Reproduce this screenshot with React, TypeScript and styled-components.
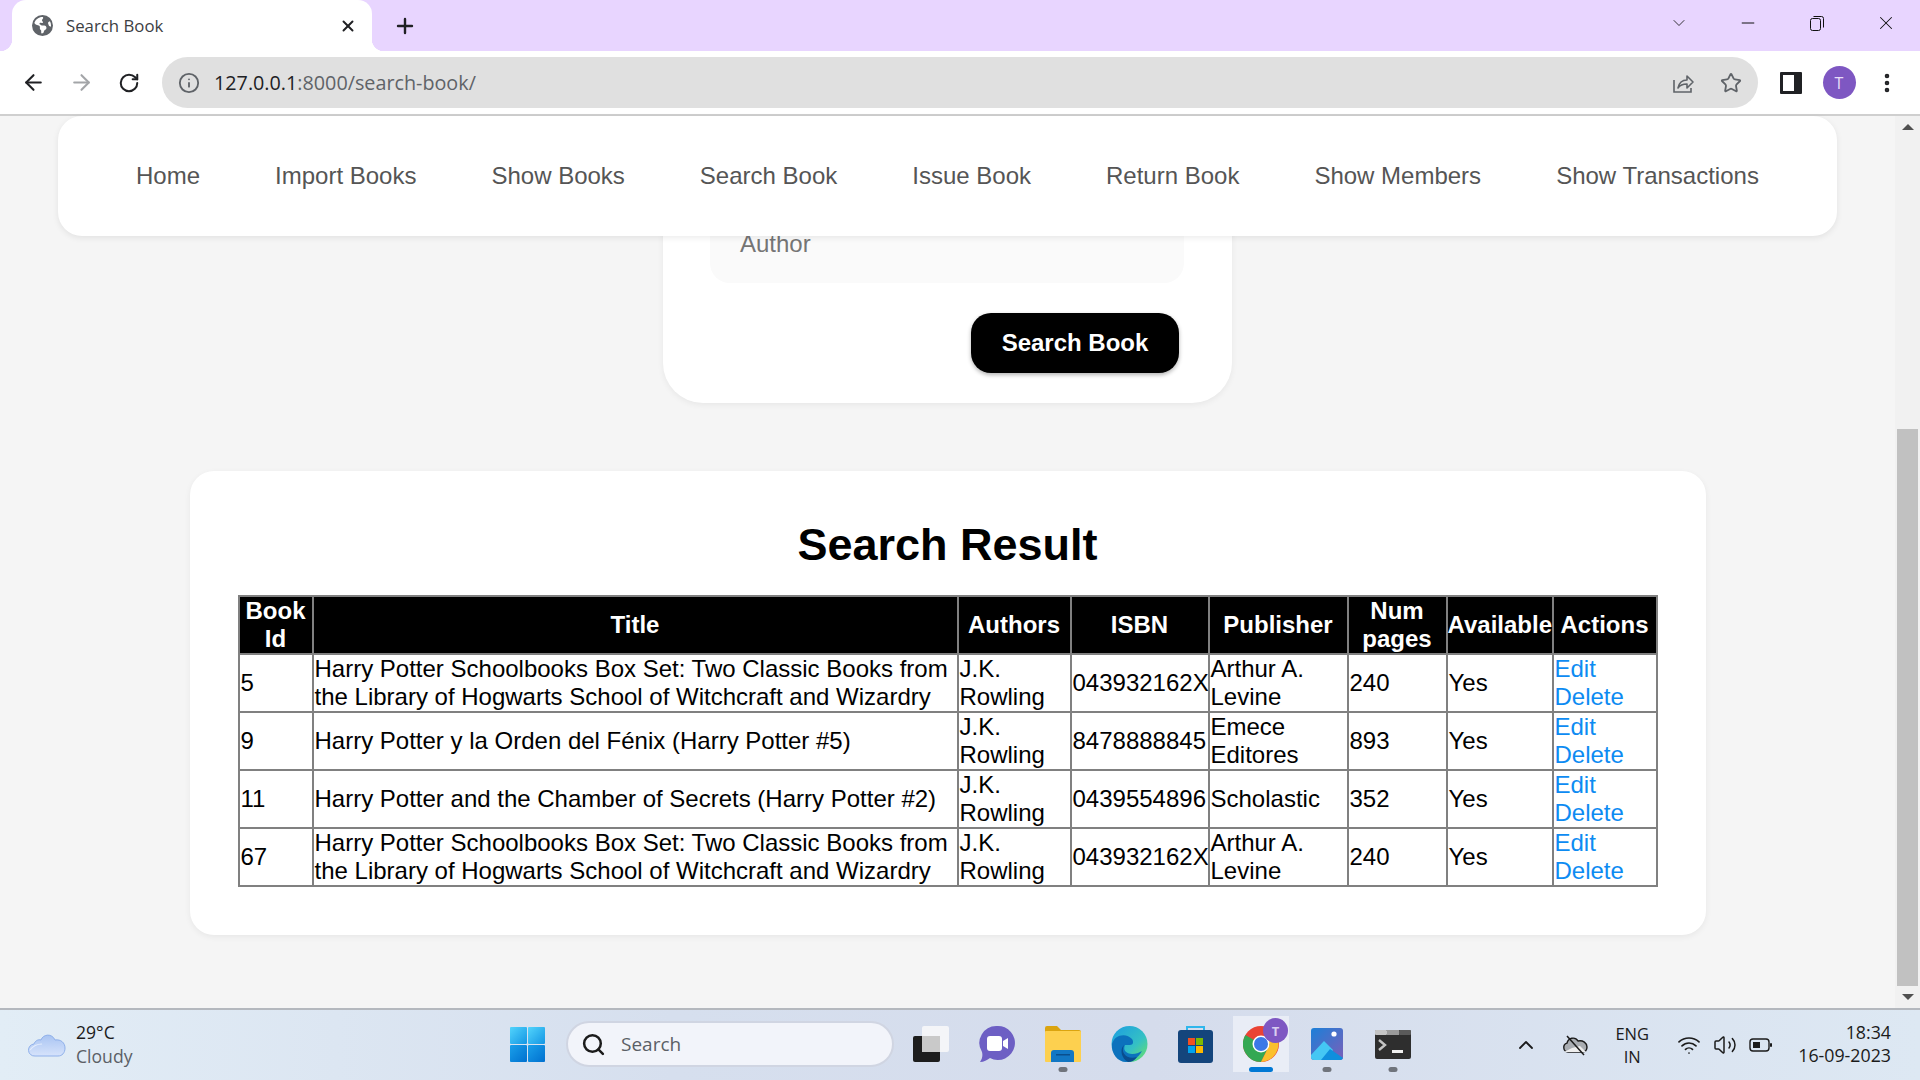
import styled, { createGlobalStyle } from 'styled-components'
import { ArrowLeft, ArrowRight, ChevronDown, ChevronUp, Info, Minus, MoreVertical, Plus, RotateCw, Search, Star, Volume2, Wifi, X } from 'lucide-react'
import { FaEarthAmericas } from 'react-icons/fa6'

const NAV_LINKS = ['Home', 'Import Books', 'Show Books', 'Search Book', 'Issue Book', 'Return Book', 'Show Members', 'Show Transactions']

const HEADERS = ['Book Id', 'Title', 'Authors', 'ISBN', 'Publisher', 'Num pages', 'Available', 'Actions']
const COLUMN_WIDTHS = [74, 645, 113, 138, 139, 99, 106, 104]

const BOX_SET = 'Harry Potter Schoolbooks Box Set: Two Classic Books from the Library of Hogwarts School of Witchcraft and Wizardry'
const BOOKS = [
  { id: 5, title: BOX_SET, isbn: '043932162X', publisher: 'Arthur A. Levine', pages: 240 },
  { id: 9, title: 'Harry Potter y la Orden del Fénix (Harry Potter #5)', isbn: '8478888845', publisher: 'Emece Editores', pages: 893 },
  { id: 11, title: 'Harry Potter and the Chamber of Secrets (Harry Potter #2)', isbn: '0439554896', publisher: 'Scholastic', pages: 352 },
  { id: 67, title: BOX_SET, isbn: '043932162X', publisher: 'Arthur A. Levine', pages: 240 },
]

const GlobalStyle = createGlobalStyle`
  html, body {
    margin: 0;
    padding: 0;
    overflow: hidden;
  }
  * {
    box-sizing: border-box;
  }
`

const ShareIcon = () => (
  <svg width="24" height="24" viewBox="0 0 24 24" fill="none" stroke="#5f6368" strokeWidth="1.6">
    <path d="M3 9v12h17v-4" />
    <path d="M7 17c1-5 4-8 9-8V5l6 6-6 6v-4c-4 0-7 1-9 4z" strokeLinejoin="round" />
  </svg>
)

const SidePanelIcon = () => (
  <svg width="22" height="22" viewBox="0 0 22 22">
    <rect width="22" height="22" rx="1" fill="#202124" />
    <rect x="3" y="3" width="11" height="16" fill="#fff" />
  </svg>
)

const RestoreIcon = () => (
  <svg width="16" height="16" viewBox="0 0 16 16" fill="none" stroke="#111" strokeWidth="1">
    <rect x="1.5" y="3.5" width="10" height="12" rx="2" />
    <path d="M4.5 1.5h8a2 2 0 0 1 2 2v9" />
  </svg>
)

const CloudIcon = () => (
  <svg width="38" height="30" viewBox="0 0 38 30">
    <defs>
      <linearGradient id="cloudFill" x1="0" y1="0" x2="0" y2="1">
        <stop offset="0" stopColor="#a9c4f2" />
        <stop offset="1" stopColor="#d6e3fb" />
      </linearGradient>
    </defs>
    <path d="M7 27a6 6 0 0 1-1-12c1-3 4-5 7-4 2-6 11-7 14 0 6-1 10 3 10 8s-3 8-7 8z" fill="url(#cloudFill)" stroke="#8fb0ea" strokeWidth="1" />
    <path d="M2 21c3-4 8-6 12-6" fill="none" stroke="#e4edfc" strokeWidth="1.2" />
  </svg>
)

const WindowsIcon = () => (
  <svg width="35" height="35" viewBox="0 0 35 35">
    <defs>
      <linearGradient id="winA" x1="0" y1="0" x2="1" y2="1">
        <stop offset="0" stopColor="#52d4fc" />
        <stop offset="1" stopColor="#1496e4" />
      </linearGradient>
      <linearGradient id="winB" x1="0" y1="0" x2="1" y2="1">
        <stop offset="0" stopColor="#1aa0ea" />
        <stop offset="1" stopColor="#0070cf" />
      </linearGradient>
    </defs>
    <rect x="0" y="0" width="17" height="17" rx="1" fill="url(#winA)" />
    <rect x="18" y="0" width="17" height="17" rx="1" fill="url(#winA)" />
    <rect x="0" y="18" width="17" height="17" rx="1" fill="url(#winB)" />
    <rect x="18" y="18" width="17" height="17" rx="1" fill="url(#winB)" />
  </svg>
)

const TaskViewIcon = () => (
  <svg width="36" height="36" viewBox="0 0 36 36">
    <rect x="0" y="10" width="27" height="26" rx="2" fill="#1d1d1d" />
    <rect x="9" y="0" width="27" height="26" rx="2" fill="#f4f5f8" />
    <rect x="9" y="10" width="18" height="16" fill="#c9c9c9" />
  </svg>
)

const ChatIcon = () => (
  <svg width="36" height="38" viewBox="0 0 36 38">
    <path d="M18 1a17 17 0 1 1-7 32c-3 2-6 4-10 4 2-3 3-6 2-10A17 17 0 0 1 18 1z" fill="#6d5fc4" />
    <rect x="8" y="11" width="15" height="15" rx="3" fill="#fff" />
    <path d="M24 16l5-3v11l-5-3z" fill="#fff" />
  </svg>
)

const FolderIcon = () => (
  <svg width="36" height="36" viewBox="0 0 36 36">
    <path d="M0 2a2 2 0 0 1 2-2h10l4 4h18a2 2 0 0 1 2 2v4H0z" fill="#dba40f" />
    <rect x="0" y="5" width="36" height="31" rx="1" fill="#fdd04f" />
    <path d="M6 36v-9a3 3 0 0 1 3-3h17a3 3 0 0 1 3 3v9z" fill="#1277c4" />
    <rect x="11" y="28" width="14" height="1.5" fill="#0a4f8d" />
  </svg>
)

const EdgeIcon = () => (
  <svg width="37" height="38" viewBox="0 0 37 38">
    <defs>
      <linearGradient id="edgeTop" x1="0" y1="0" x2="1" y2="1">
        <stop offset="0" stopColor="#1b9de2" />
        <stop offset="0.6" stopColor="#35c1c4" />
        <stop offset="1" stopColor="#6fe45f" />
      </linearGradient>
    </defs>
    <circle cx="18.5" cy="19" r="18" fill="url(#edgeTop)" />
    <path d="M1 19c2-9 14-12 20-5 2 3 1 6-2 6h-5c-3 6 3 11 13 8l4-2c-4 7-10 11-16 11C7 37 0 29 1 19z" fill="#0c72bd" />
    <path d="M13 20c-4 8 3 15 13 12-2 3-5 5-9 5-6-3-9-12-4-17z" fill="#0a4d8e" />
  </svg>
)

const StoreIcon = () => (
  <svg width="35" height="38" viewBox="0 0 35 38">
    <path d="M9 8V2h17v6" fill="none" stroke="#2fb6ec" strokeWidth="2" />
    <rect x="0" y="5" width="35" height="33" rx="3" fill="#14457c" />
    <rect x="10" y="13" width="7" height="7" fill="#f25022" />
    <rect x="18" y="13" width="7" height="7" fill="#7fba00" />
    <rect x="10" y="21" width="7" height="7" fill="#00a4ef" />
    <rect x="18" y="21" width="7" height="7" fill="#ffb900" />
  </svg>
)

const ChromeIcon = () => (
  <svg width="36" height="36" viewBox="0 0 36 36">
    <circle cx="18" cy="18" r="18" fill="#ea4335" />
    <path d="M18 18L2.4 9A18 18 0 0 0 18 36l9-18z" fill="#34a853" />
    <path d="M18 10h15.6A18 18 0 0 1 18 36l9-18z" fill="#fbc02d" />
    <circle cx="18" cy="18" r="8.5" fill="#fff" />
    <circle cx="18" cy="18" r="7" fill="#3b78e7" />
  </svg>
)

const PhotosIcon = () => (
  <svg width="32" height="32" viewBox="0 0 32 32">
    <defs>
      <linearGradient id="photoBg" x1="0" y1="0" x2="1" y2="1">
        <stop offset="0" stopColor="#1b7fd8" />
        <stop offset="1" stopColor="#7b5fb8" />
      </linearGradient>
    </defs>
    <rect width="32" height="32" rx="3" fill="url(#photoBg)" />
    <circle cx="23" cy="6" r="2.6" fill="#fff" />
    <path d="M0 27l13-14 9 9-7 10H3a3 3 0 0 1-3-3z" fill="#44c7f4" />
    <path d="M10 32l9-11 13 9v-1a3 3 0 0 1-3 3z" fill="#0f8fdd" />
  </svg>
)

const TerminalIcon = () => (
  <svg width="36" height="29" viewBox="0 0 36 29">
    <rect width="36" height="29" rx="2" fill="#2e2e2e" />
    <rect x="12" y="0" width="12" height="5" fill="#9a9a9a" />
    <rect x="0" y="0" width="12" height="5" rx="1" fill="#c4c4c4" />
    <rect x="24" y="0" width="12" height="5" rx="1" fill="#5a5a5a" />
    <path d="M4 10l6 5-6 5" fill="none" stroke="#c4c4c4" strokeWidth="2.4" />
    <rect x="17" y="20" width="11" height="3" fill="#f0f0f0" />
  </svg>
)

const OneDriveOffIcon = () => (
  <svg width="26" height="24" viewBox="0 0 26 24">
    <path d="M6 19a4.5 4.5 0 0 1-1-8.8C6 5 13 3 16 8c5-1 9 2 9 6s-2 5-5 5z" fill="#a9adb2" stroke="#1b1b1b" strokeWidth="1.4" />
    <path d="M2 19h22l-6-6-8 2z" fill="#eee" />
    <path d="M5 3l17 19" stroke="#1b1b1b" strokeWidth="1.5" />
  </svg>
)

const BatteryIcon = () => (
  <svg width="24" height="16" viewBox="0 0 24 16">
    <rect x="1" y="2" width="19" height="12" rx="3" fill="none" stroke="#1b1b1b" strokeWidth="1.4" />
    <rect x="4" y="5" width="7" height="6" fill="#1b1b1b" />
    <rect x="21" y="6" width="2" height="4" rx="1" fill="#1b1b1b" />
  </svg>
)

function App() {
  return (
    <Screen>
      <GlobalStyle />
      <TabStrip>
        <Tab>
          <FaEarthAmericas size={21} color="#5f6368" />
          <TabTitle>Search Book</TabTitle>
          <X size={18} color="#202124" strokeWidth={2.6} />
        </Tab>
        <NewTab><Plus size={24} color="#202124" strokeWidth={2.4} /></NewTab>
        <WindowControls>
          <WindowButton><ChevronDown size={20} strokeWidth={1} /></WindowButton>
          <WindowButton><Minus size={20} strokeWidth={1.2} /></WindowButton>
          <WindowButton><RestoreIcon /></WindowButton>
          <WindowButton><X size={22} strokeWidth={1.1} /></WindowButton>
        </WindowControls>
      </TabStrip>

      <Toolbar>
        <ToolButton><ArrowLeft size={25} color="#202124" strokeWidth={2} /></ToolButton>
        <ToolButton><ArrowRight size={25} color="#a3a5a8" strokeWidth={2} /></ToolButton>
        <ToolButton><RotateCw size={22} color="#202124" strokeWidth={2.2} /></ToolButton>
        <Omnibox>
          <Info size={22} color="#5f6368" strokeWidth={2} />
          <Url><UrlHost>127.0.0.1</UrlHost>:8000/search-book/</Url>
          <OmniActions>
            <ToolButton><ShareIcon /></ToolButton>
            <ToolButton><Star size={22} color="#5f6368" strokeWidth={2} /></ToolButton>
          </OmniActions>
        </Omnibox>
        <ToolButton><SidePanelIcon /></ToolButton>
        <ToolButton><Avatar>T</Avatar></ToolButton>
        <ToolButton><MoreVertical size={24} color="#202124" strokeWidth={2.6} /></ToolButton>
      </Toolbar>

      <Viewport>
        <Page>
          <NavBar>
            {NAV_LINKS.map(link => <NavLink key={link}>{link}</NavLink>)}
          </NavBar>

          <FormCard>
            <AuthorField>Author</AuthorField>
            <SubmitButton>Search Book</SubmitButton>
          </FormCard>

          <ResultCard>
            <ResultTitle>Search Result</ResultTitle>
            <BookTable>
              <colgroup>
                {COLUMN_WIDTHS.map((width, i) => <col key={i} style={{ width }} />)}
              </colgroup>
              <thead>
                <tr>
                  {HEADERS.map(header => <HeadCell key={header}>{header}</HeadCell>)}
                </tr>
              </thead>
              <tbody>
                {BOOKS.map(book => (
                  <tr key={book.id}>
                    <Cell>{book.id}</Cell>
                    <Cell>{book.title}</Cell>
                    <Cell>J.K. Rowling</Cell>
                    <Cell>{book.isbn}</Cell>
                    <Cell>{book.publisher}</Cell>
                    <Cell>{book.pages}</Cell>
                    <Cell>Yes</Cell>
                    <Cell>
                      <ActionLink href="#">Edit</ActionLink>
                      <ActionLink href="#">Delete</ActionLink>
                    </Cell>
                  </tr>
                ))}
              </tbody>
            </BookTable>
          </ResultCard>
        </Page>
        <ScrollTrack>
          <ScrollArrow $up />
          <ScrollSpace>
            <ScrollThumb />
          </ScrollSpace>
          <ScrollArrow />
        </ScrollTrack>
      </Viewport>

      <Taskbar>
        <Weather>
          <CloudIcon />
          <WeatherText>
            <span>29°C</span>
            <WeatherNote>Cloudy</WeatherNote>
          </WeatherText>
        </Weather>
        <TaskIcons>
          <TaskSlot><WindowsIcon /></TaskSlot>
          <SearchBox>
            <Search size={25} color="#1b1b1b" strokeWidth={2.4} />
            <span>Search</span>
          </SearchBox>
          <TaskSlot><TaskViewIcon /></TaskSlot>
          <TaskSlot><ChatIcon /></TaskSlot>
          <TaskSlot $state="open"><FolderIcon /></TaskSlot>
          <TaskSlot><EdgeIcon /></TaskSlot>
          <TaskSlot><StoreIcon /></TaskSlot>
          <TaskSlot $state="active">
            <ChromeIcon />
            <ChromeBadge>T</ChromeBadge>
          </TaskSlot>
          <TaskSlot $state="open"><PhotosIcon /></TaskSlot>
          <TaskSlot $state="open"><TerminalIcon /></TaskSlot>
        </TaskIcons>
        <Tray>
          <TrayChevron><ChevronUp size={24} color="#1b1b1b" strokeWidth={1.8} /></TrayChevron>
          <OneDriveOffIcon />
          <Language>
            <span>ENG</span>
            <span>IN</span>
          </Language>
          <TrayIcons>
            <Wifi size={24} color="#1b1b1b" strokeWidth={1.7} />
            <Volume2 size={24} color="#1b1b1b" strokeWidth={1.5} />
            <BatteryIcon />
          </TrayIcons>
          <Clock>
            <span>18:34</span>
            <span>16-09-2023</span>
          </Clock>
        </Tray>
      </Taskbar>
    </Screen>
  )
}

const Screen = styled.div`
  width: 1920px;
  height: 1080px;
  display: flex;
  flex-direction: column;
  overflow: hidden;
  font-family: "Liberation Sans", Arial, sans-serif;
`
const TabStrip = styled.div`
  height: 51px;
  flex: none;
  display: flex;
  align-items: flex-end;
  padding-left: 12px;
  background-color: #e8d5ff;
`
const Tab = styled.div`
  position: relative;
  width: 360px;
  height: 51px;
  padding: 0 15px 0 20px;
  display: flex;
  align-items: center;
  background-color: #fff;
  border-radius: 14px 14px 0 0;
  &::before, &::after {
    content: '';
    position: absolute;
    bottom: 0;
    width: 12px;
    height: 12px;
  }
  &::before {
    left: -12px;
    background: radial-gradient(circle at 0 0, #e8d5ff 12px, #fff 12.5px);
  }
  &::after {
    right: -12px;
    background: radial-gradient(circle at 100% 0, #e8d5ff 12px, #fff 12.5px);
  }
`
const TabTitle = styled.span`
  flex: 1;
  margin-left: 13px;
  font-family: "Open Sans", sans-serif;
  font-size: 16.8px;
  color: #3c4043;
`
const NewTab = styled.div`
  width: 40px;
  height: 51px;
  margin-left: 13px;
  display: flex;
  align-items: center;
  justify-content: center;
`
const WindowControls = styled.div`
  margin-left: auto;
  height: 45px;
  align-self: flex-start;
  display: flex;
`
const WindowButton = styled.div`
  width: 69px;
  display: flex;
  align-items: center;
  justify-content: center;
  color: #111;
`
const Toolbar = styled.div`
  height: 65px;
  flex: none;
  padding: 0 9px 0 9px;
  display: flex;
  align-items: center;
  background-color: #fff;
  border-bottom: 2px solid #cfcfcf;
`
const ToolButton = styled.div`
  width: 48px;
  height: 48px;
  flex: none;
  display: flex;
  align-items: center;
  justify-content: center;
`
const Omnibox = styled.div`
  flex: 1;
  height: 51px;
  margin: 0 9px 0 9px;
  padding: 0 3px 0 16px;
  display: flex;
  align-items: center;
  background-color: #e0e0e0;
  border-radius: 26px;
`
const Url = styled.span`
  margin-left: 14px;
  font-family: "Open Sans", sans-serif;
  font-size: 19.75px;
  color: #5f6368;
`
const UrlHost = styled.span`
  color: #202124;
`
const OmniActions = styled.div`
  margin-left: auto;
  display: flex;
`
const Avatar = styled.div`
  width: 33px;
  height: 33px;
  display: flex;
  align-items: center;
  justify-content: center;
  border-radius: 50%;
  background-color: #7e57c2;
  color: #e8def8;
  font-family: "Open Sans", sans-serif;
  font-size: 16px;
`
const Viewport = styled.div`
  flex: 1;
  min-height: 0;
  display: flex;
  background-color: #f5f5f5;
`
const Page = styled.div`
  flex: 1;
  min-width: 0;
  display: flex;
  flex-direction: column;
  align-items: center;
`
const NavBar = styled.nav`
  position: relative;
  z-index: 2;
  width: 1779px;
  height: 120px;
  flex: none;
  padding: 0 78px;
  display: flex;
  align-items: center;
  justify-content: space-between;
  background-color: #fff;
  border-radius: 24px;
  box-shadow: 0 2px 6px rgba(0, 0, 0, 0.08);
`
const NavLink = styled.a`
  font-size: 24px;
  color: #555;
`
/* the page is scrolled, the top of the form is hidden under the sticky nav */
const FormCard = styled.div`
  width: 569px;
  margin-top: -40px;
  padding: 17px 48px 30px 47px;
  display: flex;
  flex-direction: column;
  background-color: #fff;
  border-radius: 40px;
  box-shadow: 0 2px 6px rgba(0, 0, 0, 0.06);
`
const AuthorField = styled.div`
  height: 70px;
  padding: 0 0 9px 30px;
  display: flex;
  align-items: center;
  font-size: 24px;
  color: #757575;
  background-color: #fafafa;
  border-radius: 20px;
`
const SubmitButton = styled.button`
  width: 208px;
  height: 60px;
  margin: 30px 5px 0 auto;
  border: none;
  border-radius: 20px;
  background-color: #000;
  color: #fff;
  font-family: inherit;
  font-size: 24px;
  font-weight: 700;
  box-shadow: 0 2px 4px rgba(0, 0, 0, 0.3);
`
const ResultCard = styled.section`
  width: 1516px;
  margin-top: 68px;
  padding: 48px;
  background-color: #fff;
  border-radius: 24px;
  box-shadow: 0 2px 6px rgba(0, 0, 0, 0.06);
`
const ResultTitle = styled.h2`
  margin: 0 0 24px;
  font-size: 45px;
  line-height: 52px;
  font-weight: 700;
  text-align: center;
  color: #000;
`
const BookTable = styled.table`
  width: 1420px;
  table-layout: fixed;
  border-collapse: collapse;
  border: 2px solid #808080;
`
const HeadCell = styled.th`
  padding: 0;
  border: 2px solid #808080;
  background-color: #000;
  color: #fff;
  font-size: 24px;
  line-height: 28px;
  font-weight: 700;
  text-align: center;
`
const Cell = styled.td`
  padding: 0 0 0 1px;
  border: 2px solid #808080;
  font-size: 24px;
  line-height: 28px;
  color: #000;
`
const ActionLink = styled.a`
  display: block;
  color: #0d8bf2;
  text-decoration: none;
`
const ScrollTrack = styled.div`
  width: 25px;
  flex: none;
  display: flex;
  flex-direction: column;
  align-items: center;
  background-color: #f1f1f1;
`
const ScrollArrow = styled.div<{ $up?: boolean }>`
  height: 22px;
  flex: none;
  width: 100%;
  position: relative;
  &::after {
    content: '';
    position: absolute;
    left: 7px;
    top: 8px;
    border-left: 6px solid transparent;
    border-right: 6px solid transparent;
    ${p => p.$up ? 'border-bottom: 6px solid #505050;' : 'border-top: 6px solid #505050;'}
  }
`
const ScrollSpace = styled.div`
  flex: 1;
  width: 100%;
  padding: 291px 2px 0;
`
const ScrollThumb = styled.div`
  height: 100%;
  background-color: #c1c1c1;
`
const Taskbar = styled.footer`
  height: 72px;
  flex: none;
  display: flex;
  align-items: center;
  border-top: 2px solid #b4b8be;
  background: linear-gradient(90deg, #e2edf6 0%, #d6dfee 35%, #d5dcec 60%, #dde8f3 100%);
`
const Weather = styled.div`
  width: 494px;
  flex: none;
  padding: 0 0 2px 28px;
  display: flex;
  align-items: center;
  gap: 10px;
`
const WeatherText = styled.div`
  display: flex;
  flex-direction: column;
  font-family: "Open Sans", sans-serif;
  font-size: 17.6px;
  line-height: 24px;
  color: #1b1b1b;
`
const WeatherNote = styled.span`
  color: #5b5f66;
`
const TaskIcons = styled.div`
  padding-bottom: 2px;
  display: flex;
  align-items: center;
`
const TaskSlot = styled.div<{ $state?: 'open' | 'active' }>`
  position: relative;
  width: 66px;
  height: 56px;
  flex: none;
  display: flex;
  align-items: center;
  justify-content: center;
  border-radius: 5px;
  ${p => p.$state === 'active' && `
    background: linear-gradient(90deg, transparent 5px, #e9edf6 5px, #e9edf6 61px, transparent 61px);
  `}
  ${p => p.$state && `
    &::after {
      content: '';
      position: absolute;
      bottom: 0;
      left: 50%;
      transform: translateX(-50%);
      height: 5px;
      border-radius: 3px;
      width: ${p.$state === 'active' ? '24px' : '9px'};
      background-color: ${p.$state === 'active' ? '#0078d4' : '#70747c'};
    }
  `}
`
const ChromeBadge = styled.div`
  position: absolute;
  top: 2px;
  right: 6px;
  width: 25px;
  height: 25px;
  display: flex;
  align-items: center;
  justify-content: center;
  border-radius: 50%;
  background-color: #7e57c2;
  color: #d9cdf0;
  font-family: "Open Sans", sans-serif;
  font-size: 13px;
  font-weight: 700;
`
const SearchBox = styled.div`
  width: 328px;
  height: 46px;
  flex: none;
  margin: 0 4px 0 6px;
  padding-left: 13px;
  display: flex;
  align-items: center;
  gap: 15px;
  border-radius: 23px;
  border: 2px solid #d0d5e2;
  background-color: #f2f4fa;
  font-family: "Open Sans", sans-serif;
  font-size: 19px;
  color: #5b5f66;
`
const Tray = styled.div`
  margin-left: auto;
  padding-right: 29px;
  display: flex;
  align-items: center;
`
const TrayChevron = styled.div`
  display: flex;
  margin-right: 24px;
`
const Language = styled.div`
  width: 36px;
  margin: 0 27px 0 26px;
  display: flex;
  flex-direction: column;
  align-items: center;
  font-family: "Open Sans", sans-serif;
  font-size: 16.5px;
  line-height: 23px;
  color: #1b1b1b;
`
const TrayIcons = styled.div`
  display: flex;
  align-items: center;
  gap: 12px;
`
const Clock = styled.div`
  margin-left: 25px;
  padding-bottom: 2px;
  display: flex;
  flex-direction: column;
  align-items: flex-end;
  font-family: "Open Sans", sans-serif;
  font-size: 17.8px;
  line-height: 23px;
  color: #1b1b1b;
`
export default App
